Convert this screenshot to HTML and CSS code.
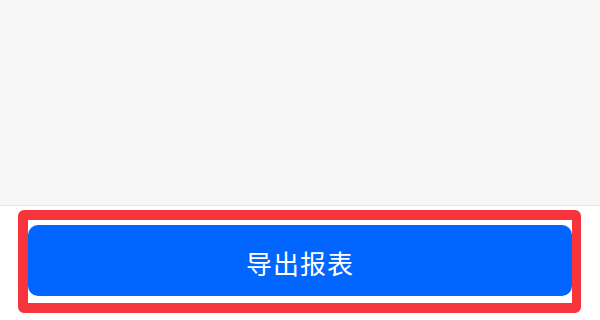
FILE: index.html
```html
<!DOCTYPE html>
<html lang="zh-CN">
<head>
  <meta charset="UTF-8">
  <meta name="viewport" content="width=device-width, initial-scale=1.0">
  <title>导出报表</title>
  <link rel="stylesheet" href="styles.css">
</head>
<body>
  <div class="content"></div>

  <div class="footer">
    <div class="highlight">
      <button class="export-btn">导出报表</button>
    </div>
  </div>
</body>
</html>
```

FILE: styles.css
```css
html,
body {
  margin: 0;
  padding: 0;
  height: 320px;
  overflow: hidden;
  background: #ffffff;
  font-family: "Noto Sans CJK SC", "Noto Sans", sans-serif;
}

.content {
  height: 205px;
  background: #f7f7f7;
  border-bottom: 1px solid #e8e8e8;
}

.footer {
  padding: 4px 19px 0 18px;
}

.highlight {
  display: flex;
  height: 77px;
  padding: 5px 0 1px 0;
  box-sizing: content-box;
  border: 10px solid #f7343b;
  border-right-width: 9px;
  border-radius: 6px;
}

.export-btn {
  flex: 1;
  height: 71px;
  margin: 0;
  padding: 4px 0 0 0;
  border: none;
  border-radius: 10px;
  background: #0066ff;
  color: #ffffff;
  font-family: "Noto Sans CJK SC", "Noto Sans", sans-serif;
  font-size: 26px;
  letter-spacing: 1px;
  cursor: pointer;
}
```
